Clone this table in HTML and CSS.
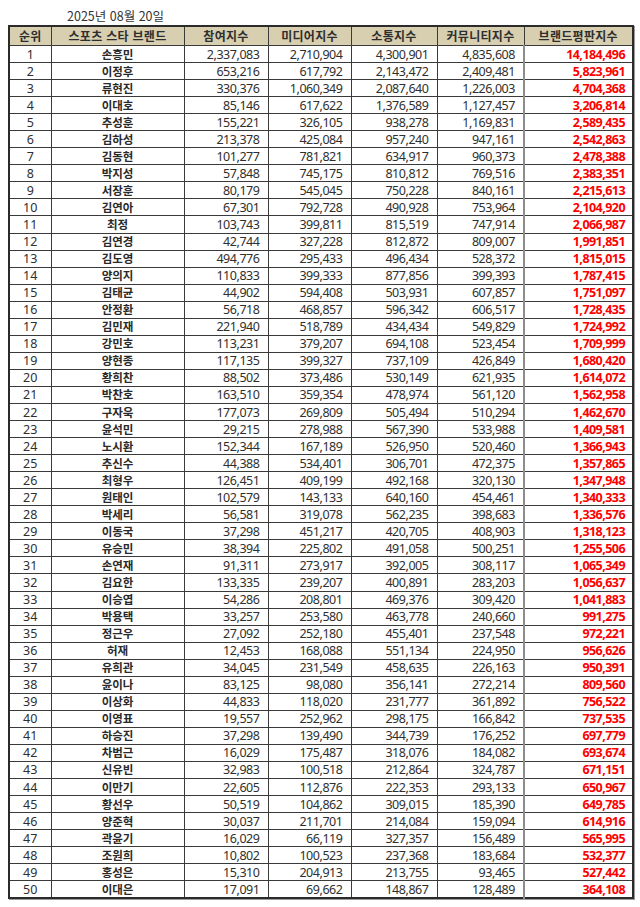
FILE: index.html
```html
<!DOCTYPE html>
<html lang="ko">
<head>
<meta charset="utf-8">
<title>스포츠 스타 브랜드평판</title>
<link rel="stylesheet" href="styles.css">
</head>
<body>
<div class="page">
  <div class="date">2025년 08월 20일</div>
  <table class="rank">
    <colgroup>
      <col class="c-rank"><col class="c-name"><col class="c-n1"><col class="c-n2"><col class="c-n3"><col class="c-n4"><col class="c-total">
    </colgroup>
    <thead>
      <tr><th>순위</th><th>스포츠 스타 브랜드</th><th>참여지수</th><th>미디어지수</th><th>소통지수</th><th>커뮤니티지수</th><th class="h-total">브랜드평판지수</th></tr>
    </thead>
    <tbody>
<tr><td class="no">1</td><td class="nm">손흥민</td><td>2,337,083</td><td>2,710,904</td><td>4,300,901</td><td>4,835,608</td><td class="tot">14,184,496</td></tr>
<tr><td class="no">2</td><td class="nm">이정후</td><td>653,216</td><td>617,792</td><td>2,143,472</td><td>2,409,481</td><td class="tot">5,823,961</td></tr>
<tr><td class="no">3</td><td class="nm">류현진</td><td>330,376</td><td>1,060,349</td><td>2,087,640</td><td>1,226,003</td><td class="tot">4,704,368</td></tr>
<tr><td class="no">4</td><td class="nm">이대호</td><td>85,146</td><td>617,622</td><td>1,376,589</td><td>1,127,457</td><td class="tot">3,206,814</td></tr>
<tr><td class="no">5</td><td class="nm">추성훈</td><td>155,221</td><td>326,105</td><td>938,278</td><td>1,169,831</td><td class="tot">2,589,435</td></tr>
<tr><td class="no">6</td><td class="nm">김하성</td><td>213,378</td><td>425,084</td><td>957,240</td><td>947,161</td><td class="tot">2,542,863</td></tr>
<tr><td class="no">7</td><td class="nm">김동현</td><td>101,277</td><td>781,821</td><td>634,917</td><td>960,373</td><td class="tot">2,478,388</td></tr>
<tr><td class="no">8</td><td class="nm">박지성</td><td>57,848</td><td>745,175</td><td>810,812</td><td>769,516</td><td class="tot">2,383,351</td></tr>
<tr><td class="no">9</td><td class="nm">서장훈</td><td>80,179</td><td>545,045</td><td>750,228</td><td>840,161</td><td class="tot">2,215,613</td></tr>
<tr><td class="no">10</td><td class="nm">김연아</td><td>67,301</td><td>792,728</td><td>490,928</td><td>753,964</td><td class="tot">2,104,920</td></tr>
<tr><td class="no">11</td><td class="nm">최정</td><td>103,743</td><td>399,811</td><td>815,519</td><td>747,914</td><td class="tot">2,066,987</td></tr>
<tr><td class="no">12</td><td class="nm">김연경</td><td>42,744</td><td>327,228</td><td>812,872</td><td>809,007</td><td class="tot">1,991,851</td></tr>
<tr><td class="no">13</td><td class="nm">김도영</td><td>494,776</td><td>295,433</td><td>496,434</td><td>528,372</td><td class="tot">1,815,015</td></tr>
<tr><td class="no">14</td><td class="nm">양의지</td><td>110,833</td><td>399,333</td><td>877,856</td><td>399,393</td><td class="tot">1,787,415</td></tr>
<tr><td class="no">15</td><td class="nm">김태균</td><td>44,902</td><td>594,408</td><td>503,931</td><td>607,857</td><td class="tot">1,751,097</td></tr>
<tr><td class="no">16</td><td class="nm">안정환</td><td>56,718</td><td>468,857</td><td>596,342</td><td>606,517</td><td class="tot">1,728,435</td></tr>
<tr><td class="no">17</td><td class="nm">김민재</td><td>221,940</td><td>518,789</td><td>434,434</td><td>549,829</td><td class="tot">1,724,992</td></tr>
<tr><td class="no">18</td><td class="nm">강민호</td><td>113,231</td><td>379,207</td><td>694,108</td><td>523,454</td><td class="tot">1,709,999</td></tr>
<tr><td class="no">19</td><td class="nm">양현종</td><td>117,135</td><td>399,327</td><td>737,109</td><td>426,849</td><td class="tot">1,680,420</td></tr>
<tr><td class="no">20</td><td class="nm">황희찬</td><td>88,502</td><td>373,486</td><td>530,149</td><td>621,935</td><td class="tot">1,614,072</td></tr>
<tr><td class="no">21</td><td class="nm">박찬호</td><td>163,510</td><td>359,354</td><td>478,974</td><td>561,120</td><td class="tot">1,562,958</td></tr>
<tr><td class="no">22</td><td class="nm">구자욱</td><td>177,073</td><td>269,809</td><td>505,494</td><td>510,294</td><td class="tot">1,462,670</td></tr>
<tr><td class="no">23</td><td class="nm">윤석민</td><td>29,215</td><td>278,988</td><td>567,390</td><td>533,988</td><td class="tot">1,409,581</td></tr>
<tr><td class="no">24</td><td class="nm">노시환</td><td>152,344</td><td>167,189</td><td>526,950</td><td>520,460</td><td class="tot">1,366,943</td></tr>
<tr><td class="no">25</td><td class="nm">추신수</td><td>44,388</td><td>534,401</td><td>306,701</td><td>472,375</td><td class="tot">1,357,865</td></tr>
<tr><td class="no">26</td><td class="nm">최형우</td><td>126,451</td><td>409,199</td><td>492,168</td><td>320,130</td><td class="tot">1,347,948</td></tr>
<tr><td class="no">27</td><td class="nm">원태인</td><td>102,579</td><td>143,133</td><td>640,160</td><td>454,461</td><td class="tot">1,340,333</td></tr>
<tr><td class="no">28</td><td class="nm">박세리</td><td>56,581</td><td>319,078</td><td>562,235</td><td>398,683</td><td class="tot">1,336,576</td></tr>
<tr><td class="no">29</td><td class="nm">이동국</td><td>37,298</td><td>451,217</td><td>420,705</td><td>408,903</td><td class="tot">1,318,123</td></tr>
<tr><td class="no">30</td><td class="nm">유승민</td><td>38,394</td><td>225,802</td><td>491,058</td><td>500,251</td><td class="tot">1,255,506</td></tr>
<tr><td class="no">31</td><td class="nm">손연재</td><td>91,311</td><td>273,917</td><td>392,005</td><td>308,117</td><td class="tot">1,065,349</td></tr>
<tr><td class="no">32</td><td class="nm">김요한</td><td>133,335</td><td>239,207</td><td>400,891</td><td>283,203</td><td class="tot">1,056,637</td></tr>
<tr><td class="no">33</td><td class="nm">이승엽</td><td>54,286</td><td>208,801</td><td>469,376</td><td>309,420</td><td class="tot">1,041,883</td></tr>
<tr><td class="no">34</td><td class="nm">박용택</td><td>33,257</td><td>253,580</td><td>463,778</td><td>240,660</td><td class="tot">991,275</td></tr>
<tr><td class="no">35</td><td class="nm">정근우</td><td>27,092</td><td>252,180</td><td>455,401</td><td>237,548</td><td class="tot">972,221</td></tr>
<tr><td class="no">36</td><td class="nm">허재</td><td>12,453</td><td>168,088</td><td>551,134</td><td>224,950</td><td class="tot">956,626</td></tr>
<tr><td class="no">37</td><td class="nm">유희관</td><td>34,045</td><td>231,549</td><td>458,635</td><td>226,163</td><td class="tot">950,391</td></tr>
<tr><td class="no">38</td><td class="nm">윤이나</td><td>83,125</td><td>98,080</td><td>356,141</td><td>272,214</td><td class="tot">809,560</td></tr>
<tr><td class="no">39</td><td class="nm">이상화</td><td>44,833</td><td>118,020</td><td>231,777</td><td>361,892</td><td class="tot">756,522</td></tr>
<tr><td class="no">40</td><td class="nm">이영표</td><td>19,557</td><td>252,962</td><td>298,175</td><td>166,842</td><td class="tot">737,535</td></tr>
<tr><td class="no">41</td><td class="nm">하승진</td><td>37,298</td><td>139,490</td><td>344,739</td><td>176,252</td><td class="tot">697,779</td></tr>
<tr><td class="no">42</td><td class="nm">차범근</td><td>16,029</td><td>175,487</td><td>318,076</td><td>184,082</td><td class="tot">693,674</td></tr>
<tr><td class="no">43</td><td class="nm">신유빈</td><td>32,983</td><td>100,518</td><td>212,864</td><td>324,787</td><td class="tot">671,151</td></tr>
<tr><td class="no">44</td><td class="nm">이만기</td><td>22,605</td><td>112,876</td><td>222,353</td><td>293,133</td><td class="tot">650,967</td></tr>
<tr><td class="no">45</td><td class="nm">황선우</td><td>50,519</td><td>104,862</td><td>309,015</td><td>185,390</td><td class="tot">649,785</td></tr>
<tr><td class="no">46</td><td class="nm">양준혁</td><td>30,037</td><td>211,701</td><td>214,084</td><td>159,094</td><td class="tot">614,916</td></tr>
<tr><td class="no">47</td><td class="nm">곽윤기</td><td>16,029</td><td>66,119</td><td>327,357</td><td>156,489</td><td class="tot">565,995</td></tr>
<tr><td class="no">48</td><td class="nm">조원희</td><td>10,802</td><td>100,523</td><td>237,368</td><td>183,684</td><td class="tot">532,377</td></tr>
<tr><td class="no">49</td><td class="nm">홍성은</td><td>15,310</td><td>204,913</td><td>213,755</td><td>93,465</td><td class="tot">527,442</td></tr>
<tr><td class="no">50</td><td class="nm">이대은</td><td>17,091</td><td>69,662</td><td>148,867</td><td>128,489</td><td class="tot">364,108</td></tr>
    </tbody>
  </table>
</div>
</body>
</html>
```

FILE: styles.css
```css
html, body {
  margin: 0;
  padding: 0;
  background: #ffffff;
}

.page {
  width: 640px;
  height: 907px;
  font-family: "Noto Sans", "Noto Sans CJK KR", sans-serif;
  color: #2a2a2a;
}

.date {
  height: 25px;
  padding-left: 67px;
  box-sizing: border-box;
  font-family: "Noto Sans CJK KR", "Noto Sans", sans-serif;
  font-size: 12.5px;
  line-height: 32px;
  color: #333;
}

.rank {
  margin-left: 8px;
  width: 624px;
  border-collapse: collapse;
  table-layout: fixed;
  border: 2px solid #2b2b2b;
  box-shadow: 1px 1px 0 #9a9a9a;
}

.c-rank { width: 42px; }
.c-name { width: 133px; }
.c-n1 { width: 84px; }
.c-n2 { width: 83px; }
.c-n3 { width: 86px; }
.c-n4 { width: 87px; }
.c-total { width: 109px; }

.rank th {
  height: 18px;
  padding: 0;
  background: #d8cfb0;
  border: 1px solid #3a3a3a;
  font-family: "Noto Sans CJK KR", sans-serif;
  font-size: 12px;
  font-weight: 700;
  color: #2e2e2e;
  line-height: 16px;
  text-align: center;
  letter-spacing: 0.3px;
}

.rank td {
  height: 16.06px;
  padding: 0 8px 0 0;
  border: 1px solid #3a3a3a;
  font-size: 12.5px;
  line-height: 15px;
  text-align: right;
  letter-spacing: -0.45px;
  color: #2f2f2f;
  white-space: nowrap;
  overflow: hidden;
}

.rank td.no {
  padding: 0;
  text-align: center;
  letter-spacing: 0;
}

.rank td.nm {
  padding: 0;
  text-align: center;
  font-family: "Noto Sans CJK KR", sans-serif;
  font-weight: 700;
  font-size: 11.5px;
  letter-spacing: 0;
  color: #2a2a2a;
}

.rank td.tot {
  padding-right: 7px;
  border-left: 2px solid #8d8d8d;
  color: #ff0000;
  font-weight: 700;
  letter-spacing: -0.55px;
}
```
